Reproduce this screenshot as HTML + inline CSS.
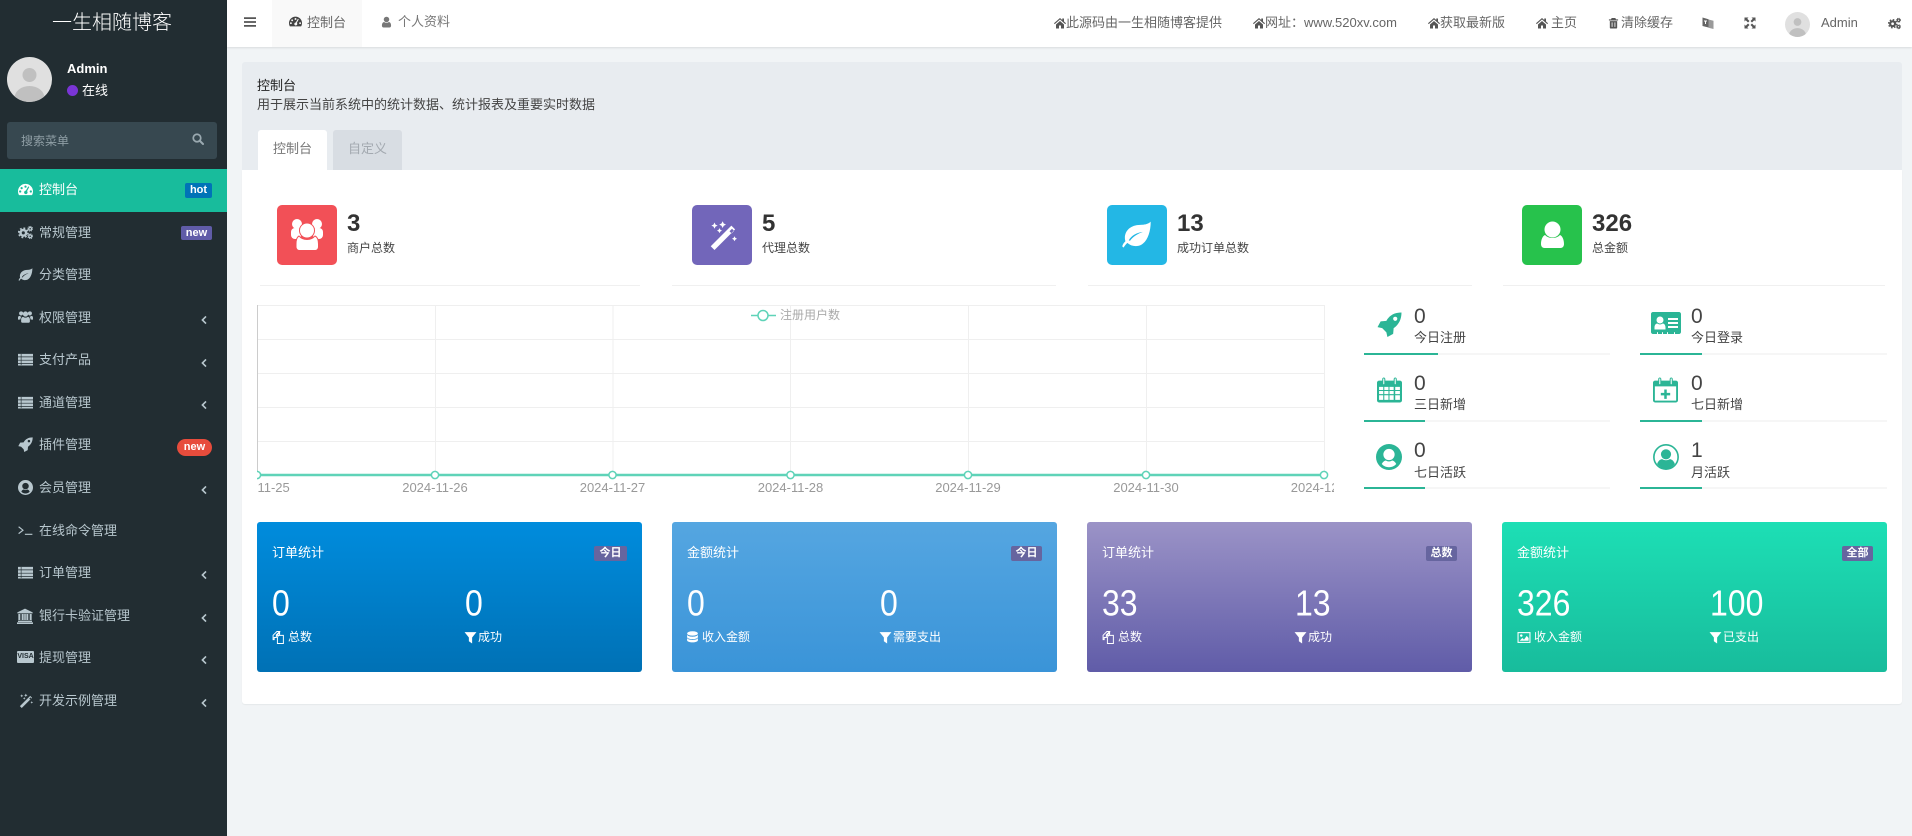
<!DOCTYPE html>
<html lang="zh">
<head>
<meta charset="utf-8">
<title>控制台</title>
<style>
html,body{margin:0;padding:0;width:1912px;height:836px;overflow:hidden;background:#f1f4f6;font-family:"Liberation Sans","Noto Sans CJK SC",sans-serif;font-size:13px;color:#333}
.a,.t,.i{position:absolute}
.t{white-space:nowrap;line-height:20px}
.i{display:block;fill:currentColor}
.m{left:39px;color:#b8c7ce;font-size:13px}
.c{left:200px;width:8px;height:10px;color:#b8c7ce}
.mi{left:18px;width:15px;height:15px;color:#b8c7ce}
.n{color:#666}
.num{font-size:24px;font-weight:bold;color:#333;line-height:30px}
.lab{font-size:12px;color:#444}
.u{height:1px;background:#f0f0f0;top:285px}
.si{width:60px;height:60px;top:205px;border-radius:5px}
.sv{font-size:21px;color:#444;line-height:24px}
.sl{font-size:13px;color:#444}
.bar{height:2px;background:#f6f6f6}
.bar b{display:block;height:2px;background:#2bb596}
.card{top:522px;height:150px;border-radius:3px}
.ct{color:#fff;font-size:13px;top:543px}
.bd{top:546px;height:15px;line-height:15px;text-align:center;color:#fff;font-size:11px;font-weight:bold;background:#66659f;border-radius:2px}
.big{color:#fff;font-size:32px;line-height:36px;top:585px;transform:scaleY(1.14);transform-origin:0 50%}
.cl{color:#fff;font-size:12px;top:627px}
.ci{width:13px;height:13px;top:631px;color:#fff}
.si2{color:#2bb596}
</style>
</head>
<body>
<svg width="0" height="0" style="position:absolute">
<defs>
<symbol id="dash" viewBox="0 0 24 24"><path fill-rule="evenodd" d="M12 3A12 12 0 0 0 0 15c0 2.200.6 4.300 1.600 6h20.800c1-1.700 1.600-3.800 1.600-6A12 12 0 0 0 12 3zM12 5.500a1.800 1.800 0 1 1 0 3.600 1.800 1.800 0 0 1 0-3.600zM5.800 8a1.800 1.800 0 1 1 0 3.600 1.800 1.800 0 0 1 0-3.600zM3.500 13.300a1.800 1.800 0 1 1 0 3.600 1.800 1.800 0 0 1 0-3.600zM20.500 13.300a1.800 1.800 0 1 1 0 3.600 1.800 1.800 0 0 1 0-3.600zM16.500 7l1.500 1-3.500 6.600a2.800 2.800 0 1 1-2-.8z"/></symbol>
<symbol id="cogs" viewBox="0 0 24 24"><g fill="none" stroke="currentColor"><circle cx="8.500" cy="12.500" r="4.500" stroke-width="4"/><circle cx="8.500" cy="12.500" r="7.400" stroke-width="2.600" stroke-dasharray="2.900 2.910"/><circle cx="19.500" cy="6" r="2.300" stroke-width="2.200"/><circle cx="19.500" cy="6" r="3.900" stroke-width="1.400" stroke-dasharray="1.500 1.560"/><circle cx="19.500" cy="18" r="2.300" stroke-width="2.200"/><circle cx="19.500" cy="18" r="3.900" stroke-width="1.400" stroke-dasharray="1.500 1.560"/></g></symbol>
<symbol id="leaf" viewBox="0 0 24 24"><path fill-rule="evenodd" d="M23 2c-1.500 1.500-4 2.500-8 2.500C7.500 4.500 3 9 3 14.500c0 1 .2 1.900.4 2.700C2.300 18.300 1.300 19.600 1 21c.1.600.6 1 1.100 1 .8-1.300 1.900-2.800 2.900-3.500 1.700 1.700 4.200 2.500 6.500 2.500C19 21 23 12 23 2zM6 16.500C8 13 12 10.500 17 10c-4 1.400-7.500 3.500-10 6.800z"/></symbol>
<symbol id="users" viewBox="0 0 24 24"><circle cx="5" cy="7" r="3.300"/><circle cx="19" cy="7" r="3.300"/><circle cx="12" cy="8" r="4.200"/><path d="M0 17v-3.500C0 11.500 1.500 11 3 11c.7.800 1.500 1.200 2.500 1.300-.9 1-1.500 2.300-1.500 4.200-1.500.5-3 .6-4 .5zM24 17v-3.500c0-2-1.500-2.500-3-2.500-.7.800-1.500 1.200-2.500 1.300.9 1 1.500 2.300 1.500 4.200 1.500.5 3 .6 4 .5z"/><path d="M8.500 12.500c1 .9 2.200 1.300 3.500 1.300s2.500-.4 3.500-1.300c2.500 0 3.500 2 3.500 4.500V20c0 1-.8 2-2 2H7c-1.200 0-2-1-2-2v-3c0-2.500 1-4.500 3.500-4.500z"/></symbol>
<symbol id="list" viewBox="0 0 24 24"><path d="M0 3h24v4.200H0zM0 8.300h24v4.200H0zM0 13.600h24v4.200H0zM0 18.900h24v2.600H0z"/><path d="M4.500 3h1v18h-1z" fill="#222d32"/></symbol>
<symbol id="rocket" viewBox="0 0 24 24"><path fill-rule="evenodd" d="M23.500.5C23.500 7 21 12 16 15.500l-.5 5.500-5.500 3-1-4.500-4-4-4.500-1 3-5.500 5.500-.5C12 3 17 .5 23.500.5zM17.500 4.500a2 2 0 1 0 0 4 2 2 0 0 0 0-4z"/></symbol>
<symbol id="ucircle" viewBox="0 0 24 24"><path fill-rule="evenodd" d="M12 0a12 12 0 1 0 0 24 12 12 0 0 0 0-24zM12 4.500a5.200 5.200 0 1 1 0 10.400 5.200 5.200 0 0 1 0-10.400zM5.300 18.500c1-2 2.200-3 3.700-3.300 1 .6 2 .9 3 .9s2-.3 3-.9c1.500.3 2.700 1.300 3.700 3.300A9 9 0 0 1 12 21.500a9 9 0 0 1-6.700-3z"/></symbol>
<symbol id="ucircle2" viewBox="0 0 24 24"><circle cx="12" cy="12" r="11.200" fill="none" stroke="currentColor" stroke-width="1.500"/><circle cx="12" cy="9.500" r="4.700"/><path d="M3.800 18.500c.8-2.500 2.500-4.300 4.700-4.500 1 .8 2.200 1 3.500 1s2.500-.2 3.500-1c2.200.2 3.900 2 4.700 4.500A11 11 0 0 1 12 23a11 11 0 0 1-8.200-4.500z"/></symbol>
<symbol id="term" viewBox="0 0 24 24"><path d="M1 6l7 5.500-7 5.500M11 18h12" fill="none" stroke="currentColor" stroke-width="1.800"/></symbol>
<symbol id="bank" viewBox="0 0 24 24"><path d="M12 1L.5 6.500V8h23V6.500zM2 9h3v9H2zM7 9h3v9H7zM14 9h3v9h-3zM19 9h3v9h-3zM10.800 9h2.400v9h-2.400zM1.500 19h21v2h-21zM0 21.500h24V24H0z"/></symbol>
<symbol id="wand" viewBox="0 0 24 24"><path d="M19.500 4.500l3 3L6 24l-3-3zM18 9l1.700 1.700 2-2-1.700-1.700zM6 2l.8 1.700 1.700.8-1.700.8L6 7l-.8-1.700-1.700-.8 1.700-.8zM12.500 1l.9 1.800 1.800.9-1.800.9-.9 1.800-.9-1.800-1.800-.9 1.800-.9zM22 13l.7 1.300 1.300.7-1.300.7L22 17l-.7-1.300-1.300-.7 1.300-.7zM10 6.500l.7 1.300 1.300.7-1.300.7-.7 1.300-.7-1.300-1.300-.7 1.300-.7z"/></symbol>
<symbol id="chev" viewBox="0 0 10 12"><path d="M7.500 1.500L3 6l4.500 4.500" fill="none" stroke="currentColor" stroke-width="2"/></symbol>
<symbol id="search" viewBox="0 0 24 24"><circle cx="10" cy="10" r="7.500" fill="none" stroke="currentColor" stroke-width="3.500"/><path d="M15.500 15.500L22 22" stroke="currentColor" stroke-width="4" stroke-linecap="round"/></symbol>
<symbol id="user" viewBox="0 0 24 24"><circle cx="12" cy="6.500" r="6"/><path d="M7 12c1.300 1.200 3 1.900 5 1.900s3.700-.7 5-1.900c3.500.3 5 3.800 5 8 0 2.500-1.500 4-3.500 4h-13C3.500 24 2 22.500 2 20c0-4.200 1.500-7.700 5-8z"/></symbol>
<symbol id="bars" viewBox="0 0 24 24"><path d="M0 2.500h24v3.400H0zM0 10.300h24v3.400H0zM0 18.100h24v3.400H0z"/></symbol>
<symbol id="home" viewBox="0 0 24 24"><path d="M12 2L0 12.500l1.500 1.700L12 5l10.500 9.200 1.500-1.700-4-3.500V3h-3.500v2.900zM4 15v8h6v-6h4v6h6v-8l-8-7z"/></symbol>
<symbol id="trash" viewBox="0 0 24 24"><path fill-rule="evenodd" d="M8 1h8l1.500 3H22v2.500H2V4h4.500zM4 8h16v14c0 1-.8 2-2 2H6c-1.200 0-2-1-2-2zM8 10.500v10h1.800v-10zM14.200 10.500v10H16v-10z"/></symbol>
<symbol id="lang" viewBox="0 0 24 24"><path d="M13 5l10 2.500V24l-10-2.500z" fill="#9a9a9a"/><path d="M1 1l12 3.500V21L1 18z" fill="#666"/><path d="M4 7h6v2H4zM6 9h2v5H6z" fill="#fff"/></symbol>
<symbol id="exp" viewBox="0 0 24 24"><path d="M1 1h8L6.500 3.500 11 8l-3 3-4.500-4.500L1 9zM23 1v8l-2.500-2.500L16 11l-3-3 4.500-4.500L15 1zM1 23v-8l2.500 2.500L8 13l3 3-4.500 4.500L9 23zM23 23h-8l2.500-2.500L13 16l3-3 4.500 4.500L23 15z"/></symbol>
<symbol id="filter" viewBox="0 0 24 24"><path d="M1 2h22L15 12v11l-6-4v-7z"/></symbol>
<symbol id="files" viewBox="0 0 24 24"><path d="M9 1h5l-6 6v5H4v4H2V8zM14 3v5H9zM12 8h9v15H10V12z" fill="none" stroke="currentColor" stroke-width="1.800"/></symbol>
<symbol id="db" viewBox="0 0 24 24"><ellipse cx="12" cy="4.500" rx="10" ry="4"/><path d="M2 7v4c0 2.200 4.500 4 10 4s10-1.800 10-4V7c-1 2.500-5.500 3.500-10 3.500S3 9.500 2 7zM2 13v4c0 2.200 4.500 4 10 4s10-1.800 10-4v-4c-1 2.500-5.500 3.500-10 3.500S3 15.500 2 13z"/></symbol>
<symbol id="pic" viewBox="0 0 24 24"><rect x="1" y="3" width="22" height="18" fill="none" stroke="currentColor" stroke-width="2"/><circle cx="7" cy="8.500" r="2.300"/><path d="M4 18l5-5 3 3 5-7 3.500 4V18z"/></symbol>
<symbol id="card" viewBox="0 0 30 24"><path fill-rule="evenodd" d="M2 0h26c1.100 0 2 .9 2 2v18c0 1.100-.9 2-2 2h-4v-1.500c0-.5-1-.5-1 0V22h-6v-1.500c0-.5-1-.5-1 0V22h-4v-1.500c0-.5-1-.5-1 0V22H7v-1.500c0-.5-1-.5-1 0V22H2c-1.100 0-2-.9-2-2V2C0 .9.900 0 2 0zM9 4.500a3.500 3.500 0 1 0 0 7 3.500 3.500 0 0 0 0-7zM3.500 17.500h11v-2c0-2-1-4-2.800-4-.7.600-1.700.9-2.700.9s-2-.3-2.700-.9c-1.800 0-2.800 2-2.800 4zM17 6v2h10V6zM17 10v2h10v-2zM17 14v2h10v-2z"/></symbol>
<symbol id="cal" viewBox="0 0 24 24"><path fill-rule="evenodd" d="M2 3h3V1.500C5 .7 5.700 0 6.500 0S8 .7 8 1.500V3h8V1.500C16 .7 16.700 0 17.500 0S19 .7 19 1.500V3h3c1.100 0 2 .9 2 2v17c0 1.100-.9 2-2 2H2c-1.100 0-2-.9-2-2V5c0-1.100.9-2 2-2zM6 1.500V6c0 .7 1 .7 1 0V1.500c0-.7-1-.7-1 0zM17 1.500V6c0 .7 1 .7 1 0V1.500c0-.7-1-.7-1 0zM2 9v3h4V9zM7 9v3h4V9zM12 9v3h4V9zM17.500 9v3H22V9zM2 13v3h4v-3zM7 13v3h4v-3zM12 13v3h4v-3zM17.500 13v3H22v-3zM2 17v4.500h4V17zM7 17v4.500h4V17zM12 17v4.500h4V17zM17.500 17v4.500H22V17z"/></symbol>
<symbol id="calp" viewBox="0 0 24 24"><path fill-rule="evenodd" d="M2 3h3V1.500C5 .7 5.700 0 6.500 0S8 .7 8 1.500V3h8V1.500C16 .7 16.700 0 17.500 0S19 .7 19 1.500V3h3c1.100 0 2 .9 2 2v17c0 1.100-.9 2-2 2H2c-1.100 0-2-.9-2-2V5c0-1.100.9-2 2-2zM6 1.500V6c0 .7 1 .7 1 0V1.500c0-.7-1-.7-1 0zM17 1.500V6c0 .7 1 .7 1 0V1.500c0-.7-1-.7-1 0zM1.800 8.500v13.700h20.400V8.500zM10.800 11.500h2.400v3.300h3.300v2.400h-3.300v3.300h-2.400v-3.300H7.500v-2.400h3.300z"/></symbol>
</defs>
</svg>

<!-- Sidebar -->
<div class="a" style="left:0;top:0;width:227px;height:836px;background:#222d32"></div>
<div class="t" style="left:0;width:224px;top:9px;text-align:center;font-size:20px;font-weight:300;line-height:28px;color:#fff">一生相随博客</div>
<svg class="a" style="left:7px;top:57px" width="45" height="45" viewBox="0 0 45 45"><defs><clipPath id="av"><circle cx="22.500" cy="22.500" r="22.500"/></clipPath></defs><g clip-path="url(#av)"><rect width="45" height="45" fill="#e0e0e0"/><circle cx="22.500" cy="18" r="7" fill="#c0c0c0"/><ellipse cx="22.500" cy="41" rx="15" ry="12" fill="#c0c0c0"/></g></svg>
<div class="t" style="left:67px;top:59px;color:#fff;font-weight:bold;font-size:13px">Admin</div>
<div class="a" style="left:67px;top:85px;width:11px;height:11px;border-radius:50%;background:#7a35d6"></div>
<div class="t" style="left:82px;top:81px;color:#fff;font-size:13px">在线</div>
<div class="a" style="left:7px;top:122px;width:210px;height:37px;background:#374850;border-radius:3px"></div>
<div class="t" style="left:21px;top:131px;color:#8f9ea5;font-size:12px">搜索菜单</div>
<svg class="i" style="left:192px;top:133px;width:12px;height:12px;color:#9aa9b0"><use href="#search"/></svg>

<div class="a" style="left:0;top:169px;width:227px;height:43px;background:#18bc9c"></div>
<svg class="i mi" style="top:182px;color:#fff"><use href="#dash"/></svg>
<div class="t m" style="top:180px;color:#fff">控制台</div>
<div class="a" style="left:185px;top:183px;width:27px;height:15px;background:#0073b7;border-radius:2px;color:#fff;font-size:11px;font-weight:bold;line-height:14px;text-align:center">hot</div>

<svg class="i mi" style="top:225px"><use href="#cogs"/></svg>
<div class="t m" style="top:223px">常规管理</div>
<div class="a" style="left:181px;top:226px;width:31px;height:14px;background:#605ca8;border-radius:2px;color:#fff;font-size:11px;font-weight:bold;line-height:14px;text-align:center">new</div>

<svg class="i mi" style="top:267px"><use href="#leaf"/></svg>
<div class="t m" style="top:265px">分类管理</div>

<svg class="i mi" style="top:309px"><use href="#users"/></svg>
<div class="t m" style="top:308px">权限管理</div>
<svg class="i c" style="top:315px"><use href="#chev"/></svg>

<svg class="i mi" style="top:352px"><use href="#list"/></svg>
<div class="t m" style="top:350px">支付产品</div>
<svg class="i c" style="top:358px"><use href="#chev"/></svg>

<svg class="i mi" style="top:395px"><use href="#list"/></svg>
<div class="t m" style="top:393px">通道管理</div>
<svg class="i c" style="top:400px"><use href="#chev"/></svg>

<svg class="i mi" style="top:437px"><use href="#rocket"/></svg>
<div class="t m" style="top:435px">插件管理</div>
<div class="a" style="left:177px;top:439px;width:35px;height:17px;background:#e74c3c;border-radius:9px;color:#fff;font-size:11px;font-weight:bold;line-height:16px;text-align:center">new</div>

<svg class="i mi" style="top:480px"><use href="#ucircle"/></svg>
<div class="t m" style="top:478px">会员管理</div>
<svg class="i c" style="top:485px"><use href="#chev"/></svg>

<svg class="i mi" style="top:523px"><use href="#term"/></svg>
<div class="t m" style="top:521px">在线命令管理</div>

<svg class="i mi" style="top:565px"><use href="#list"/></svg>
<div class="t m" style="top:563px">订单管理</div>
<svg class="i c" style="top:570px"><use href="#chev"/></svg>

<svg class="i mi" style="left:17px;top:608px;width:16px;height:16px"><use href="#bank"/></svg>
<div class="t m" style="top:606px">银行卡验证管理</div>
<svg class="i c" style="top:613px"><use href="#chev"/></svg>

<div class="a" style="left:17px;top:651px;width:17px;height:12px;background:#b8c7ce;border-radius:1px;color:#222d32;font-size:7px;font-weight:bold;line-height:12px;text-align:center">VISA</div>
<div class="t m" style="top:648px">提现管理</div>
<svg class="i c" style="top:655px"><use href="#chev"/></svg>

<svg class="i mi" style="top:693px"><use href="#wand"/></svg>
<div class="t m" style="top:691px">开发示例管理</div>
<svg class="i c" style="top:698px"><use href="#chev"/></svg>

<!-- Header -->
<div class="a" style="left:227px;top:0;width:1685px;height:47px;background:#fff;box-shadow:0 1px 2px rgba(0,0,0,.1)"></div>
<svg class="i" style="left:244px;top:16px;width:12px;height:12px;color:#555"><use href="#bars"/></svg>
<div class="a" style="left:272px;top:0;width:90px;height:47px;background:#f9f9f9"></div>
<svg class="i" style="left:289px;top:15px;width:13px;height:13px;color:#444"><use href="#dash"/></svg>
<div class="t n" style="left:307px;top:13px">控制台</div>
<svg class="i" style="left:381px;top:16px;width:11px;height:12px;color:#777"><use href="#user"/></svg>
<div class="t" style="left:398px;top:12px;color:#777">个人资料</div>

<svg class="i" style="left:1054px;top:17px;width:12px;height:12px;color:#555"><use href="#home"/></svg>
<div class="t n" style="left:1066px;top:13px">此源码由一生相随博客提供</div>
<svg class="i" style="left:1253px;top:17px;width:12px;height:12px;color:#555"><use href="#home"/></svg>
<div class="t n" style="left:1265px;top:13px">网址：www.520xv.com</div>
<svg class="i" style="left:1428px;top:17px;width:12px;height:12px;color:#555"><use href="#home"/></svg>
<div class="t n" style="left:1440px;top:13px">获取最新版</div>
<svg class="i" style="left:1536px;top:17px;width:12px;height:12px;color:#555"><use href="#home"/></svg>
<div class="t n" style="left:1551px;top:13px">主页</div>
<svg class="i" style="left:1608px;top:17px;width:11px;height:12px;color:#555"><use href="#trash"/></svg>
<div class="t n" style="left:1621px;top:13px">清除缓存</div>
<svg class="i" style="left:1702px;top:16px;width:12px;height:14px"><use href="#lang"/></svg>
<svg class="i" style="left:1744px;top:17px;width:12px;height:12px;color:#555"><use href="#exp"/></svg>
<svg class="a" style="left:1785px;top:12px" width="25" height="25" viewBox="0 0 45 45"><g clip-path="url(#av)"><rect width="45" height="45" fill="#e0e0e0"/><circle cx="22.500" cy="18" r="7" fill="#c0c0c0"/><ellipse cx="22.500" cy="41" rx="15" ry="12" fill="#c0c0c0"/></g></svg>
<div class="t" style="left:1821px;top:13px;color:#666;font-size:13px">Admin</div>
<svg class="i" style="left:1888px;top:17px;width:13px;height:13px;color:#555"><use href="#cogs"/></svg>

<!-- Panel -->
<div class="a" style="left:242px;top:62px;width:1660px;height:108px;background:#e8ecf0;border-radius:3px 3px 0 0"></div>
<div class="a" style="left:242px;top:170px;width:1660px;height:534px;background:#fff;border-radius:0 0 3px 3px;box-shadow:0 1px 1px rgba(0,0,0,.05)"></div>
<div class="t" style="left:257px;top:76px;color:#222;font-size:13px">控制台</div>
<div class="t" style="left:257px;top:95px;color:#444;font-size:13px">用于展示当前系统中的统计数据、统计报表及重要实时数据</div>
<div class="a" style="left:258px;top:130px;width:69px;height:40px;background:#fff;border-radius:3px 3px 0 0;text-align:center;line-height:37px;color:#777;font-size:13px">控制台</div>
<div class="a" style="left:333px;top:130px;width:69px;height:40px;background:#d8dde3;border-radius:3px 3px 0 0;text-align:center;line-height:37px;color:#a3a9b0;font-size:13px">自定义</div>

<!-- Stat tiles -->
<div class="a si" style="left:277px;background:#f25057"></div>
<svg class="a" style="left:291px;top:218px" width="32" height="33" viewBox="0 0 32 33" fill="#fff">
<circle cx="6" cy="6" r="5"/><circle cx="26" cy="6" r="5"/>
<rect x="0" y="10" width="10" height="11" rx="4"/><rect x="22" y="10" width="10" height="11" rx="4"/>
<path d="M8 18c2 2.500 5 3.500 8 3.500s6-1 8-3.500c2.500 1 3.500 4 3.500 8v3c0 2-1.500 3.500-3 3.500H8c-1.500 0-3-1.500-3-3.500v-3c0-4 1-7 3-8z" stroke="#f25057" stroke-width="1"/>
<circle cx="16" cy="12.500" r="7.500" stroke="#f25057" stroke-width="1"/>
</svg>
<div class="t num" style="left:347px;top:209px">3</div>
<div class="t lab" style="left:347px;top:238px">商户总数</div>
<div class="a u" style="left:260px;width:380px"></div>

<div class="a si" style="left:692px;background:#7266ba"></div>
<svg class="i" style="left:707px;top:220px;width:30px;height:30px;color:#fff"><use href="#wand"/></svg>
<div class="t num" style="left:762px;top:209px">5</div>
<div class="t lab" style="left:762px;top:238px">代理总数</div>
<div class="a u" style="left:672px;width:384px"></div>

<div class="a si" style="left:1107px;background:#23b7e5"></div>
<svg class="i" style="left:1121px;top:219px;width:31px;height:31px;color:#fff"><use href="#leaf"/></svg>
<div class="t num" style="left:1177px;top:209px">13</div>
<div class="t lab" style="left:1177px;top:238px">成功订单总数</div>
<div class="a u" style="left:1088px;width:384px"></div>

<div class="a si" style="left:1522px;background:#27c24c"></div>
<svg class="a" style="left:1541px;top:221px" width="23" height="27" viewBox="0 0 23 27" fill="#fff"><circle cx="11.500" cy="8.500" r="8"/><path d="M4 14c2 2 4.500 3 7.500 3s5.500-1 7.500-3c2.500 1 4 5 4 9 0 2.500-1.500 4-3.500 4h-16C1.500 27 0 25.500 0 23c0-4 1.500-8 4-9z"/></svg>
<div class="t num" style="left:1592px;top:209px">326</div>
<div class="t lab" style="left:1592px;top:238px">总金额</div>
<div class="a u" style="left:1503px;width:382px"></div>

<!-- Chart -->
<svg class="a" style="left:0;top:0" width="1912" height="836" viewBox="0 0 1912 836">
<defs><clipPath id="cc"><rect x="257" y="295" width="1077" height="205"/></clipPath></defs>
<g clip-path="url(#cc)">
<g stroke="#efefef" stroke-width="1">
<path d="M257 305.500H1324M257 339.500H1324M257 373.500H1324M257 407.500H1324M257 441.500H1324"/>
<path d="M435.500 305V475M613 305V475M790.500 305V475M968.500 305V475M1146.500 305V475M1324.500 305V475"/>
</g>
<path d="M257.500 305V475" stroke="#ccc" stroke-width="1"/>
<path d="M257 475H1324" stroke="#5fd3b8" stroke-width="2.400"/>
<g fill="#fff" stroke="#5fd3b8" stroke-width="1.500">
<circle cx="257" cy="475" r="3.600"/><circle cx="435" cy="475" r="3.600"/><circle cx="612.500" cy="475" r="3.600"/><circle cx="790.500" cy="475" r="3.600"/><circle cx="968" cy="475" r="3.600"/><circle cx="1146" cy="475" r="3.600"/><circle cx="1324" cy="475" r="3.600"/>
</g>
<g font-family="Liberation Sans, sans-serif" font-size="13" fill="#999" text-anchor="middle">
<text x="257" y="492">2024-11-25</text><text x="435" y="492">2024-11-26</text><text x="612.500" y="492">2024-11-27</text><text x="790.500" y="492">2024-11-28</text><text x="968" y="492">2024-11-29</text><text x="1146" y="492">2024-11-30</text><text x="1324" y="492">2024-12-01</text>
</g>
</g>
<path d="M751 315.500H776" stroke="#5fd3b8" stroke-width="1.500"/>
<circle cx="763" cy="315.500" r="5" fill="#fff" stroke="#5fd3b8" stroke-width="1.500"/>
<text x="780" y="319" font-family="Liberation Sans, Noto Sans CJK SC, sans-serif" font-size="12" fill="#aaa">注册用户数</text>
</svg>

<!-- Right mini stats -->
<svg class="i si2" style="left:1377px;top:312px;width:25px;height:25px"><use href="#rocket"/></svg>
<div class="t sv" style="left:1414px;top:305px">0</div>
<div class="t sl" style="left:1414px;top:328px">今日注册</div>
<div class="a bar" style="left:1364px;top:353px;width:246px"><b style="width:74px"></b></div>

<svg class="i si2" style="left:1651px;top:312px;width:30px;height:24px"><use href="#card"/></svg>
<div class="t sv" style="left:1691px;top:305px">0</div>
<div class="t sl" style="left:1691px;top:328px">今日登录</div>
<div class="a bar" style="left:1640px;top:353px;width:247px"><b style="width:62px"></b></div>

<svg class="i si2" style="left:1377px;top:377px;width:25px;height:26px"><use href="#cal"/></svg>
<div class="t sv" style="left:1414px;top:372px">0</div>
<div class="t sl" style="left:1414px;top:395px">三日新增</div>
<div class="a bar" style="left:1364px;top:420px;width:246px"><b style="width:61px"></b></div>

<svg class="i si2" style="left:1653px;top:377px;width:25px;height:26px"><use href="#calp"/></svg>
<div class="t sv" style="left:1691px;top:372px">0</div>
<div class="t sl" style="left:1691px;top:395px">七日新增</div>
<div class="a bar" style="left:1640px;top:420px;width:247px"><b style="width:62px"></b></div>

<svg class="i si2" style="left:1376px;top:444px;width:26px;height:26px"><use href="#ucircle"/></svg>
<div class="t sv" style="left:1414px;top:439px">0</div>
<div class="t sl" style="left:1414px;top:463px">七日活跃</div>
<div class="a bar" style="left:1364px;top:487px;width:246px"><b style="width:61px"></b></div>

<svg class="i si2" style="left:1653px;top:444px;width:26px;height:26px"><use href="#ucircle2"/></svg>
<div class="t sv" style="left:1691px;top:439px">1</div>
<div class="t sl" style="left:1691px;top:463px">月活跃</div>
<div class="a bar" style="left:1640px;top:487px;width:247px"><b style="width:62px"></b></div>

<!-- Bottom cards -->
<div class="a card" style="left:257px;width:385px;background:linear-gradient(#008cdd,#0071b5)"></div>
<div class="t ct" style="left:272px">订单统计</div>
<div class="a bd" style="left:594px;width:33px">今日</div>
<div class="t big" style="left:272px">0</div>
<div class="t big" style="left:465px">0</div>
<svg class="i ci" style="left:272px"><use href="#files"/></svg>
<div class="t cl" style="left:288px">总数</div>
<svg class="i ci" style="left:464px"><use href="#filter"/></svg>
<div class="t cl" style="left:478px">成功</div>

<div class="a card" style="left:672px;width:385px;background:linear-gradient(#55a6e1,#3a94d8)"></div>
<div class="t ct" style="left:687px">金额统计</div>
<div class="a bd" style="left:1011px;width:31px">今日</div>
<div class="t big" style="left:687px">0</div>
<div class="t big" style="left:880px">0</div>
<svg class="i ci" style="left:686px"><use href="#db"/></svg>
<div class="t cl" style="left:702px">收入金额</div>
<svg class="i ci" style="left:879px"><use href="#filter"/></svg>
<div class="t cl" style="left:893px">需要支出</div>

<div class="a card" style="left:1087px;width:385px;background:linear-gradient(#9b93c7,#605ca8)"></div>
<div class="t ct" style="left:1102px">订单统计</div>
<div class="a bd" style="left:1426px;width:31px">总数</div>
<div class="t big" style="left:1102px">33</div>
<div class="t big" style="left:1295px">13</div>
<svg class="i ci" style="left:1102px"><use href="#files"/></svg>
<div class="t cl" style="left:1118px">总数</div>
<svg class="i ci" style="left:1294px"><use href="#filter"/></svg>
<div class="t cl" style="left:1308px">成功</div>

<div class="a card" style="left:1502px;width:385px;background:linear-gradient(#1ddfb5,#18bc9c)"></div>
<div class="t ct" style="left:1517px">金额统计</div>
<div class="a bd" style="left:1842px;width:31px">全部</div>
<div class="t big" style="left:1517px">326</div>
<div class="t big" style="left:1710px">100</div>
<svg class="i ci" style="left:1517px;width:14px"><use href="#pic"/></svg>
<div class="t cl" style="left:1534px">收入金额</div>
<svg class="i ci" style="left:1709px"><use href="#filter"/></svg>
<div class="t cl" style="left:1723px">已支出</div>
</body>
</html>
